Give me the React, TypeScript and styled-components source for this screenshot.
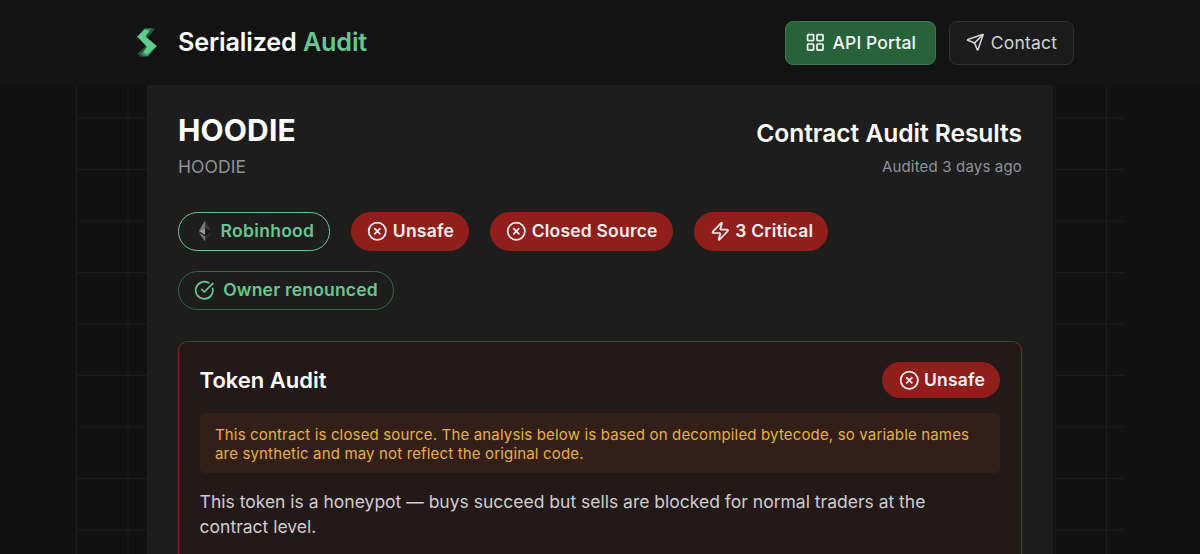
import React from 'react';
import styled, { createGlobalStyle, css } from 'styled-components';
import { CircleCheckBig, CircleX, LayoutGrid, Send, Zap } from 'lucide-react';

const GlobalStyle = createGlobalStyle`
  *, *::before, *::after { box-sizing: border-box; }
  html { background: #111111; }
  body {
    margin: 0;
    height: 554px;
    overflow: hidden;
    background: #111111;
    color: #ffffff;
    font-family: Inter, "Liberation Sans", sans-serif;
  }
  h1, h2, h3, p { margin: 0; }
`;

const green = '#68c790';
const red = '#901f1c';

const Page = styled.div`
  display: flex;
  flex-direction: column;
  height: 554px;
  overflow: hidden;
`;

const Header = styled.header`
  flex: none;
  height: 85px;
  background: #131313;
`;

const HeaderInner = styled.div`
  width: 948px;
  height: 85px;
  margin: 0 auto;
  display: flex;
  align-items: center;
  justify-content: space-between;
`;

const Brand = styled.div`
  display: flex;
  align-items: center;
  gap: 11px;
`;

const BrandName = styled.span`
  margin-bottom: 1px;
  font-size: 25.2px;
  line-height: 32px;
  font-weight: 600;
  letter-spacing: -0.15px;
`;

const Accent = styled.span`
  color: ${green};
`;

const Nav = styled.nav`
  display: flex;
  gap: 12.6px;
`;

const NavButton = styled.button<{ $primary?: boolean }>`
  height: 44px;
  padding: ${p => (p.$primary ? '0 19px 0 19px' : '0 15.8px 0 16.4px')};
  display: flex;
  align-items: center;
  gap: ${p => (p.$primary ? 7 : 6.2)}px;
  border-radius: 8px;
  border: 1px solid ${p => (p.$primary ? '#357a4d' : '#313131')};
  background: ${p => (p.$primary ? '#27623b' : '#1b1b1b')};
  color: ${p => (p.$primary ? '#f2f7f3' : '#d2d2d2')};
  font-family: inherit;
  font-size: 17.5px;
  font-weight: ${p => (p.$primary ? 500 : 400)};
  letter-spacing: ${p => (p.$primary ? 0.13 : 0.2)}px;
`;

const Backdrop = styled.main`
  flex: 1;
  width: 1048px;
  margin: 0 auto;
  padding: 0 71px;
  background-image:
    linear-gradient(to right, #1c1c1c 1px, transparent 1px),
    linear-gradient(to bottom, #1c1c1c 1px, transparent 1px);
  background-size: 51.5px 51.5px;
  background-position: 0 0, 0 -19px;
`;

const Panel = styled.section`
  height: 100%;
  padding: 27px 31px 0;
  background: #1d1d1d;
`;

const Summary = styled.div`
  display: flex;
  justify-content: space-between;
  align-items: flex-end;
`;

const TokenName = styled.h1`
  font-size: 30px;
  line-height: 36px;
  font-weight: 700;
  letter-spacing: 0.15px;
`;

const TokenSymbol = styled.p`
  margin-top: 7px;
  font-size: 17.5px;
  line-height: 24px;
  letter-spacing: 0.1px;
  color: #8f929b;
`;

const Results = styled.div`
  text-align: right;
`;

const ResultsTitle = styled.h2`
  font-size: 24.6px;
  line-height: 32px;
  font-weight: 600;
  letter-spacing: -0.05px;
`;

const ResultsDate = styled.p`
  margin-top: 6px;
  font-size: 15px;
  line-height: 24px;
  letter-spacing: 0.17px;
  color: #8f929b;
`;

const Badges = styled.div`
  margin-top: 33px;
  display: flex;
  flex-wrap: wrap;
  gap: 20.6px;
`;

type Tone = 'chain' | 'danger' | 'success';

const tones = {
  chain: css`
    padding: 0 15.2px 0 15.6px;
    gap: 5.4px;
    border: 1.5px solid ${green};
    color: ${green};
    letter-spacing: 0.3px;
  `,
  danger: css`
    padding: 0 14.3px 0 15.4px;
    gap: 4.8px;
    border: 1px solid ${red};
    background: ${red};
    color: #fbeeee;
  `,
  success: css`
    padding: 0 15px 0 15.4px;
    gap: 8.2px;
    border: 1px solid #34694a;
    color: ${green};
  `,
};

const Badge = styled.span<{ $tone: Tone; $compact?: boolean }>`
  height: ${p => (p.$compact ? 36.5 : 38.6)}px;
  display: inline-flex;
  align-items: center;
  border-radius: 20px;
  font-size: 17.5px;
  line-height: 22px;
  font-weight: 600;
  letter-spacing: 0.2px;
  white-space: nowrap;
  ${p => tones[p.$tone]}
`;

const AuditCard = styled.article`
  height: 300px;
  margin-top: 31px;
  padding: 20px 20.6px 0;
  border: 1px solid #8c2325;
  border-radius: 10px;
  background: #231919;
`;

const CardHead = styled.div`
  display: flex;
  justify-content: space-between;
  align-items: center;
`;

const CardTitle = styled.h3`
  font-size: 22px;
  line-height: 28px;
  font-weight: 600;
`;

const Notice = styled.p`
  margin-top: 15px;
  height: 59.5px;
  padding: 11.5px 15.4px 0;
  border-radius: 5px;
  background: #321f17;
  color: #e6b140;
  font-size: 15px;
  line-height: 19.3px;
  letter-spacing: 0.16px;
`;

const Finding = styled.p`
  max-width: 760px;
  margin-top: 16px;
  font-size: 17.5px;
  line-height: 25.7px;
  color: #d0cdcd;
`;

const BrandMark = () => (
  <svg width="41" height="41" viewBox="0 0 41 41" aria-hidden="true">
    <path d="M11.3 14.7 L19 6.4 H29.6 L21.7 15.3 Z" fill="#24553a" />
    <path d="M11.3 14.7 L18.6 6.6 H25.6 L19.5 15.3 Z" fill="#3a8a5c" />
    <path d="M11.3 31.6 L20.7 23.5 L30.7 24 L22 34.8 H14.5 Z" fill="#24553a" />
    <path d="M15 32 L20.7 24.7 L30.7 24 L22 34 H18 Z" fill="#3a8a5c" />
    <path d="M11.3 14.7 L18.6 7.4 L23 9 L19.4 14.2 L30.7 24 L21 32.8 L17.4 30.4 L21 25 Z" fill="#5fcc8e" />
  </svg>
);

const EtherMark = () => (
  <svg width="20.6" height="22" viewBox="0 0 20.6 22" aria-hidden="true">
    <path d="M10 .5 L3.8 11 L10 8.2 Z" fill="#777777" />
    <path d="M10 .5 L16.3 11 L10 8.2 Z" fill="#393939" />
    <path d="M3.8 11 L10 8.2 V14.7 Z" fill="#9a9a9a" />
    <path d="M16.3 11 L10 8.2 V14.7 Z" fill="#171717" />
    <path d="M3.8 12.6 L10 16.2 V21.2 Z" fill="#7c7c7c" />
    <path d="M16.3 12.6 L10 16.2 V21.2 Z" fill="#303030" />
  </svg>
);

const iconSize = 20.6;

export default function App() {
  return (
    <Page>
      <GlobalStyle />
      <Header>
        <HeaderInner>
          <Brand>
            <BrandMark />
            <BrandName>
              Serialized <Accent>Audit</Accent>
            </BrandName>
          </Brand>
          <Nav>
            <NavButton $primary>
              <LayoutGrid size={iconSize} />
              API Portal
            </NavButton>
            <NavButton>
              <Send size={18.6} />
              Contact
            </NavButton>
          </Nav>
        </HeaderInner>
      </Header>
      <Backdrop>
        <Panel>
          <Summary>
            <div>
              <TokenName>HOODIE</TokenName>
              <TokenSymbol>HOODIE</TokenSymbol>
            </div>
            <Results>
              <ResultsTitle>Contract Audit Results</ResultsTitle>
              <ResultsDate>Audited 3 days ago</ResultsDate>
            </Results>
          </Summary>
          <Badges>
            <Badge $tone="chain">
              <EtherMark />
              Robinhood
            </Badge>
            <Badge $tone="danger">
              <CircleX size={iconSize} />
              Unsafe
            </Badge>
            <Badge $tone="danger">
              <CircleX size={iconSize} />
              Closed Source
            </Badge>
            <Badge $tone="danger">
              <Zap size={iconSize} />
              3 Critical
            </Badge>
            <Badge $tone="success">
              <CircleCheckBig size={iconSize} />
              Owner renounced
            </Badge>
          </Badges>
          <AuditCard>
            <CardHead>
              <CardTitle>Token Audit</CardTitle>
              <Badge $tone="danger" $compact>
                <CircleX size={iconSize} />
                Unsafe
              </Badge>
            </CardHead>
            <Notice>
              This contract is closed source. The analysis below is based on decompiled bytecode, so variable names
              are synthetic and may not reflect the original code.
            </Notice>
            <Finding>
              This token is a honeypot — buys succeed but sells are blocked for normal traders at the
              contract level.
            </Finding>
          </AuditCard>
        </Panel>
      </Backdrop>
    </Page>
  );
}
